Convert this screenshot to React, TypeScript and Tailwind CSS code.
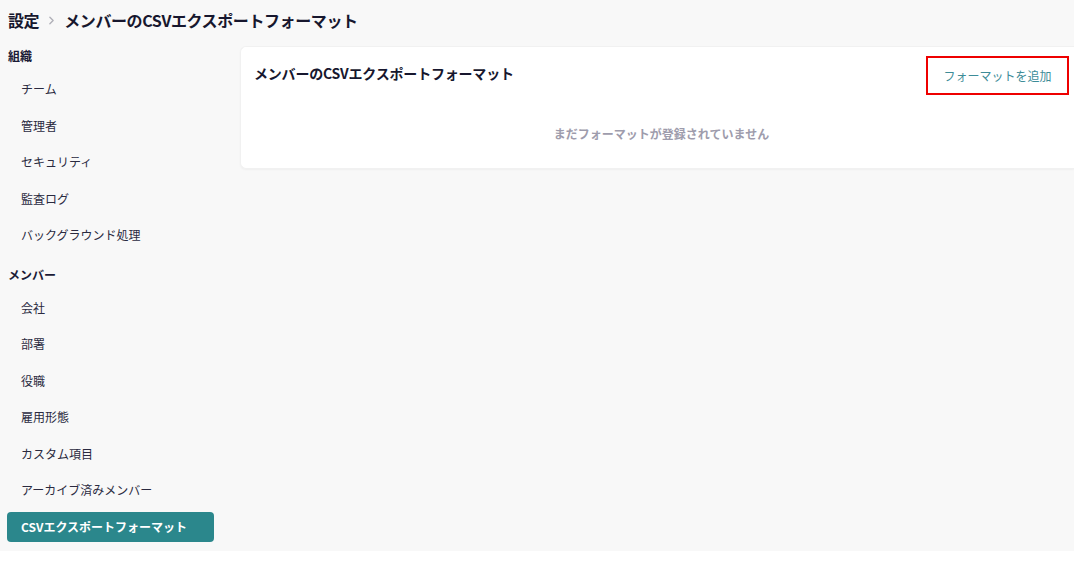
import React from 'react';

const font = { fontFamily: '"Noto Sans CJK JP", "Noto Sans", sans-serif' };

type NavItem = { label: string; active?: boolean };

const sections: { title: string; items: NavItem[] }[] = [
    {
        title: '組織',
        items: [
            { label: 'チーム' },
            { label: '管理者' },
            { label: 'セキュリティ' },
            { label: '監査ログ' },
            { label: 'バックグラウンド処理' },
        ],
    },
    {
        title: 'メンバー',
        items: [
            { label: '会社' },
            { label: '部署' },
            { label: '役職' },
            { label: '雇用形態' },
            { label: 'カスタム項目' },
            { label: 'アーカイブ済みメンバー' },
            { label: 'CSVエクスポートフォーマット', active: true },
        ],
    },
];

const Sidebar: React.FC = () => (
    <aside className="w-[214px] shrink-0">
        {sections.map((section, i) => (
            <div key={section.title} className={i > 0 ? 'mt-[11px]' : ''}>
                <div className="pl-2 h-5 leading-5 font-bold text-[12px] text-[#1b1b36] mb-[5px]">
                    {section.title}
                </div>
                {section.items.map(item => (
                    <div key={item.label} className="h-[36.5px] flex items-center pl-[7px]">
                        {item.active ? (
                            <button className="w-full h-[30px] rounded-[4px] bg-[#2b878c] text-white text-[12px] font-bold text-left px-[14px] whitespace-nowrap">
                                {item.label}
                            </button>
                        ) : (
                            <span className="pl-[14px] text-[12px] text-[#2a2a40] whitespace-nowrap">{item.label}</span>
                        )}
                    </div>
                ))}
            </div>
        ))}
    </aside>
);

export default function App() {
    return (
        <div className="w-full h-[564px] bg-white overflow-hidden" style={font}>
            <div className="h-[551px] bg-[#f8f8f8]">
                {/* Breadcrumb header */}
                <div className="h-[46px] pt-2 pl-2 flex items-start">
                    <div className="flex items-center h-6 text-[16px] font-bold text-[#17172e] tracking-[-0.4px]">
                        <span>設定</span>
                        <svg width="13" height="13" viewBox="0 0 24 24" className="mx-[6px] text-[#b0b0b8]" fill="none" stroke="currentColor" strokeWidth="2.5" strokeLinecap="round" strokeLinejoin="round">
                            <path d="M9 6l6 6-6 6" />
                        </svg>
                        <span>メンバーのCSVエクスポートフォーマット</span>
                    </div>
                </div>

                <div className="flex">
                    <Sidebar />

                    {/* Main card */}
                    <div className="flex-1 ml-[26px]">
                        <div className="bg-white rounded-l-[6px] border border-r-0 border-[#f1f1f1] shadow-[0_1px_2px_rgba(0,0,0,0.04)] h-[123px] pt-[9px] pl-[13px] pr-[5px]">
                            <div className="flex items-start justify-between h-[39px]">
                                <h2 className="mt-[7px] leading-5 text-[14px] font-bold text-[#17172e] tracking-[-0.2px]">
                                    メンバーのCSVエクスポートフォーマット
                                </h2>
                                <button className="h-[39px] w-[143px] border-2 border-[#ee0000] text-[12px] text-[#3d8c98]">
                                    フォーマットを追加
                                </button>
                            </div>
                            <p className="mt-[29px] h-5 leading-5 text-center text-[12px] font-bold text-[#9e9cac]">
                                まだフォーマットが登録されていません
                            </p>
                        </div>
                    </div>
                </div>
            </div>
        </div>
    );
}
